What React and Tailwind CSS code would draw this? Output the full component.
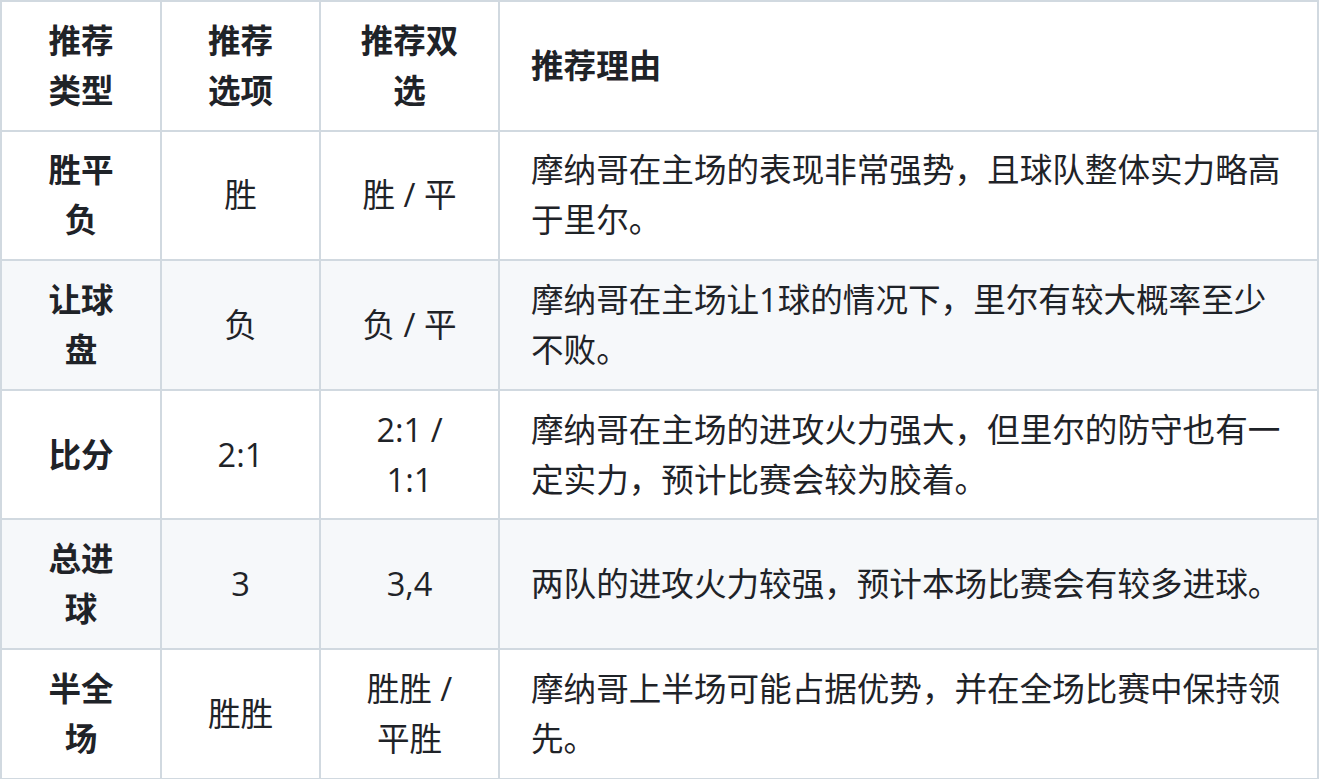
const rows = [
  { type: "胜平负", pick: "胜", dual: "胜 / 平", reason: "摩纳哥在主场的表现非常强势，且球队整体实力略高于里尔。" },
  { type: "让球盘", pick: "负", dual: "负 / 平", reason: "摩纳哥在主场让1球的情况下，里尔有较大概率至少不败。" },
  { type: "比分", pick: "2:1", dual: "2:1 / 1:1", reason: "摩纳哥在主场的进攻火力强大，但里尔的防守也有一定实力，预计比赛会较为胶着。" },
  { type: "总进球", pick: "3", dual: "3,4", reason: "两队的进攻火力较强，预计本场比赛会有较多进球。" },
  { type: "半全场", pick: "胜胜", dual: "胜胜 / 平胜", reason: "摩纳哥上半场可能占据优势，并在全场比赛中保持领先。" },
];

const cell = "border-2 border-[#d1d9e0] px-[31px] py-[13.8px] align-middle";

export default function App() {
  return (
    <div
      className="bg-white text-[#1f2328] text-[32.6px] leading-[50px]"
      style={{ fontFamily: '"Open Sans", "Noto Sans CJK SC", sans-serif' }}
    >
      <table className="w-[1319px] table-fixed border-collapse">
        <colgroup>
          <col className="w-[160px]" />
          <col className="w-[159px]" />
          <col className="w-[179px]" />
          <col />
        </colgroup>
        <thead>
          <tr>
            <th className={`${cell} text-center font-bold`}>推荐类型</th>
            <th className={`${cell} text-center font-bold`}>推荐选项</th>
            <th className={`${cell} text-center font-bold`}>推荐双选</th>
            <th className={`${cell} text-left font-bold`}>推荐理由</th>
          </tr>
        </thead>
        <tbody>
          {rows.map((r, i) => (
            <tr key={r.type} className={i % 2 === 1 ? "bg-[#f6f8fa]" : "bg-white"}>
              <td className={`${cell} text-center font-bold`}>{r.type}</td>
              <td className={`${cell} text-center`}>{r.pick}</td>
              <td className={`${cell} text-center`}>{r.dual}</td>
              <td className={`${cell} text-left`}>{r.reason}</td>
            </tr>
          ))}
        </tbody>
      </table>
    </div>
  );
}
